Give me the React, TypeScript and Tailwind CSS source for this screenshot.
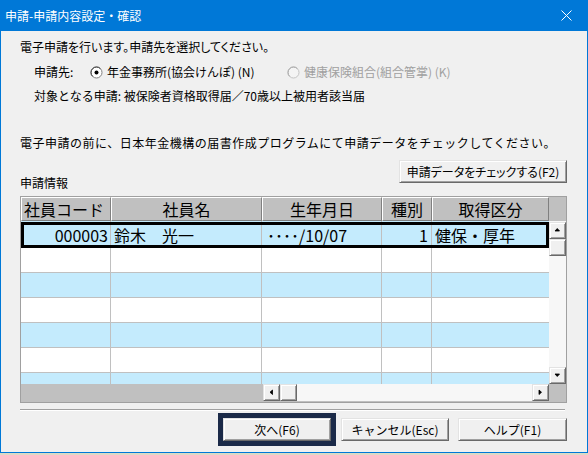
import type { ReactNode } from 'react'

const cols = [
  { w: 'w-[90px]', label: '社員コード', align: 'justify-start pl-[2px]' },
  { w: 'w-[151px]', label: '社員名', align: 'justify-center' },
  { w: 'w-[120px]', label: '生年月日', align: 'justify-center' },
  { w: 'w-[50px]', label: '種別', align: 'justify-center' },
  { w: 'w-[117px]', label: '取得区分', align: 'justify-center' },
]

function Radio({ checked, disabled }: { checked?: boolean; disabled?: boolean }) {
  return (
    <svg width="13" height="13" viewBox="0 0 13 13" className="shrink-0">
      <circle cx="6.5" cy="6.5" r="5.5" fill={disabled ? '#f4f4f4' : '#fff'} stroke={disabled ? '#c4c4c4' : '#808080'} />
      <path d="M2.6 10.4 A5.5 5.5 0 0 1 10.4 2.6" fill="none" stroke={disabled ? '#a8a8a8' : '#404040'} />
      {checked && <circle cx="6.5" cy="6.5" r="2" fill="#000" />}
    </svg>
  )
}

function WinButton({ children, className = '' }: { children: ReactNode; className?: string }) {
  return (
    <div
      className={`h-[23px] flex items-center justify-center bg-[#f0f0f0] border border-t-[#e3e3e3] border-l-[#e3e3e3] border-b-[#696969] border-r-[#696969] shadow-[inset_1px_1px_0_#fff,inset_-1px_-1px_0_#a0a0a0] ${className}`}
    >
      {children}
    </div>
  )
}

function Arrow({ dir }: { dir: 'up' | 'down' | 'left' | 'right' }) {
  const d = {
    up: 'M4 7 L8.5 7 L6.25 4.5 Z',
    down: 'M4 5 L8.5 5 L6.25 7.5 Z',
    left: 'M7.5 4 L7.5 8.5 L5 6.25 Z',
    right: 'M5 4 L5 8.5 L7.5 6.25 Z',
  }[dir]
  return (
    <div className="w-[17px] h-[17px] shrink-0 flex items-center justify-center bg-[#f0f0f0] border border-t-[#e3e3e3] border-l-[#e3e3e3] border-b-[#696969] border-r-[#696969] shadow-[inset_1px_1px_0_#fff,inset_-1px_-1px_0_#a0a0a0]">
      <svg width="13" height="13" viewBox="0 0 13 13">
        <path d={d} fill="#000" stroke="#000" strokeWidth="0.8" />
      </svg>
    </div>
  )
}

function Thumb() {
  return (
    <div className="w-[17px] h-[17px] shrink-0 bg-[#f0f0f0] border border-t-[#e3e3e3] border-l-[#e3e3e3] border-b-[#696969] border-r-[#696969] shadow-[inset_1px_1px_0_#fff,inset_-1px_-1px_0_#a0a0a0]" />
  )
}

function Row({ blue, cells, h = 'h-[25px] border-b border-[#c0c0c0]' }: { blue?: boolean; cells?: ReactNode[]; h?: string }) {
  return (
    <div className={`${h} shrink-0 flex ${blue ? 'bg-[#c4ebfd]' : 'bg-white'}`}>
      {cols.map((c, i) => (
        <div key={i} className={`${c.w} shrink-0 flex items-center ${i < 4 ? 'border-r border-[#c0c0c0]' : ''}`}>
          {cells?.[i]}
        </div>
      ))}
    </div>
  )
}

export default function App() {
  return (
    <div className="w-[588px] h-[455px] flex flex-col bg-[#dcdac6] font-['Noto_Sans_CJK_JP',sans-serif] text-[12px] text-black">
      <div className="h-[31px] shrink-0 bg-[#0078d7] flex items-center justify-between pl-[5px] pr-[16px] text-white">
        <span className="leading-[16px]">申請-申請内容設定・確認</span>
        <svg width="11" height="11" viewBox="0 0 11 11">
          <path d="M0.5 0.5 L10.5 10.5 M10.5 0.5 L0.5 10.5" stroke="#fff" strokeWidth="1" />
        </svg>
      </div>

      <div className="h-[422px] shrink-0 border-x border-b border-[#0078d7] bg-[#f0f0f0] pl-[19px] pr-[20px] pt-[8px] flex flex-col leading-[16px]">
        <div className="[font-feature-settings:'palt']">電子申請を行います。申請先を選択してください。</div>

        <div className="mt-[9px] pl-[14px] flex items-center">
          <span className="w-[56px]">申請先:</span>
          <Radio checked />
          <span className="w-[184px] pl-[4px]">年金事務所(協会けんぽ) (N)</span>
          <Radio disabled />
          <span className="pl-[4px] text-[#a0a0a0]">健康保険組合(組合管掌) (K)</span>
        </div>

        <div className="mt-[8px] pl-[14px]">対象となる申請: 被保険者資格取得届／70歳以上被用者該当届</div>

        <div className="mt-[31px] tracking-[0.5px]">電子申請の前に、日本年金機構の届書作成プログラムにて申請データをチェックしてください。</div>

        <div className="mt-[9px] flex justify-between items-start">
          <span className="mt-[15px]">申請情報</span>
          <WinButton className="w-[168px] [font-feature-settings:'palt']">申請データをチェックする(F2)</WinButton>
        </div>

        <div className="mt-[5px] w-[547px] h-[207px] shrink-0 border border-[#a0a0a0] bg-[#c0c0c0] flex flex-col text-[16px] leading-[20px]">
          <div className="h-[24px] shrink-0 flex">
            {cols.map(c => (
              <div
                key={c.label}
                className={`${c.w} shrink-0 flex items-center ${c.align} border border-t-white border-l-white border-r-[#808080] border-b-[#808080]`}
              >
                {c.label}
              </div>
            ))}
          </div>

          <div className="h-[163px] shrink-0 flex">
            <div className="w-[528px] shrink-0 flex flex-col overflow-hidden">
              <div className="relative">
                <Row
                  blue
                  h="h-[27px]"
                  cells={[
                    <span className="w-full text-right pr-[2px]">000003</span>,
                    <span className="pl-[3px]">鈴木　光一</span>,
                    <span className="pl-[5px]">････/10/07</span>,
                    <span className="w-full text-right pr-[3px]">1</span>,
                    <span className="pl-[3px]">健保・厚年</span>,
                  ]}
                />
                <div className="absolute left-0 right-0 top-[1px] bottom-0 border-[3px] border-black pointer-events-none" />
              </div>
              <Row />
              <Row blue />
              <Row />
              <Row blue />
              <Row />
              <Row blue />
            </div>
            <div className="w-[17px] shrink-0 flex flex-col pt-[1px] bg-[#f7f7f7]">
              <Arrow dir="up" />
              <Thumb />
              <div className="flex-1" />
              <Arrow dir="down" />
            </div>
          </div>

          <div className="h-[18px] shrink-0 flex">
            <div className="w-[242px] shrink-0" />
            <div className="w-[286px] shrink-0 flex bg-[#f7f7f7] border-b border-[#c0c0c0]">
              <Arrow dir="left" />
              <Thumb />
              <div className="flex-1" />
              <Arrow dir="right" />
            </div>
            <div className="flex-1" />
          </div>
        </div>

        <div className="mt-[6px] w-[545px] h-[2px] border-t border-t-[#a0a0a0] border-b border-b-white" />

        <div className="mt-[2px] flex items-center justify-end">
          <div className="border-[5px] border-[#1b2a48]">
            <WinButton className="w-[108px]">次へ(F6)</WinButton>
          </div>
          <WinButton className="ml-[5px] w-[108px]">キャンセル(Esc)</WinButton>
          <WinButton className="ml-[9px] w-[109px]">ヘルプ(F1)</WinButton>
        </div>
      </div>
    </div>
  )
}
